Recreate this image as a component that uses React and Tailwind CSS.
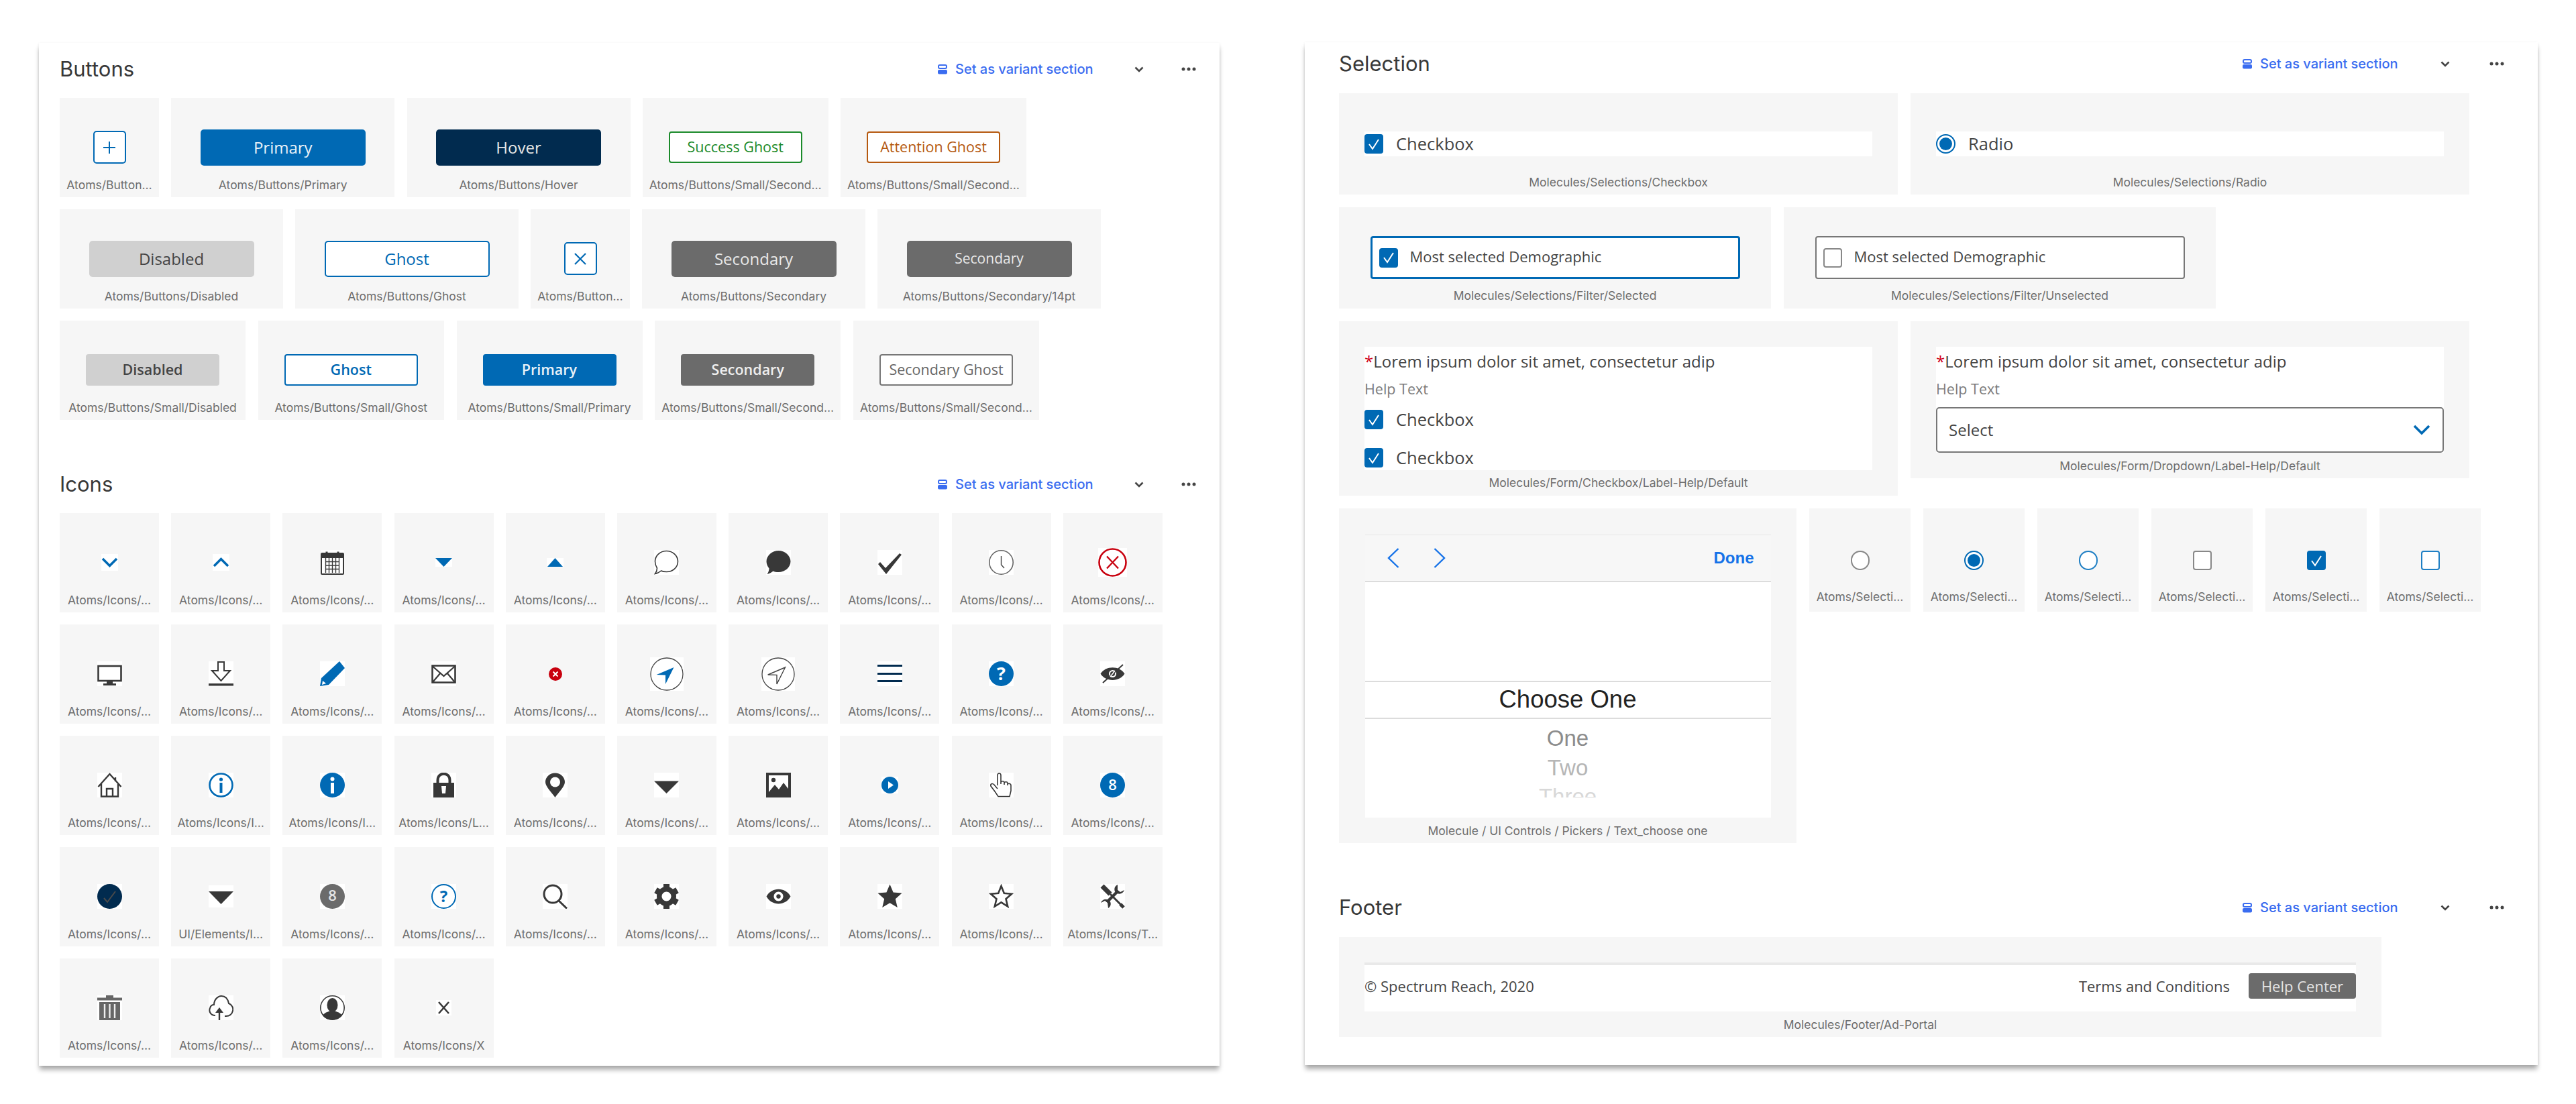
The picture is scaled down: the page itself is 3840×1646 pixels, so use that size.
const BLUE = "#0069b4";
const NAVY = "#012b4f";
const DARK = "#383838";

function Svg({ size = 37, h, children }) {
  return (
    <svg width={size} height={h || size} viewBox={`0 0 ${size} ${h || size}`} fill="none" className="block">
      {children}
    </svg>
  );
}

// white square behind each icon, like the exported frames
function Ico({ children }) {
  return <div className="bg-white">{children}</div>;
}

const glyph = { fontFamily: "'Open Sans', sans-serif", fontWeight: 700, textAnchor: "middle" };

const STAR = "18.5,0.5 23.6,12.6 36.6,13.6 26.8,22.2 29.8,35 18.5,28.2 7.2,35 10.2,22.2 0.4,13.6 13.4,12.6";

const icons = {
  chevronDown: <Svg size={25}><polyline points="2,7 12.5,17.5 23,7" stroke={BLUE} strokeWidth="3.5" /></Svg>,
  chevronUp: <Svg size={25}><polyline points="2,18 12.5,7.5 23,18" stroke={BLUE} strokeWidth="3.5" /></Svg>,
  calendar: (
    <Svg size={35} h={37}>
      <rect x="1" y="5" width="33" height="31" rx="1" fill="#fff" stroke={DARK} strokeWidth="2" />
      <rect x="1" y="5" width="33" height="7" fill={DARK} />
      <path d="M7.5 17.5H27.5M7.5 23H27.5M7.5 28.5H27.5M7.5 12V34M12.5 12V34M17.5 12V34M22.5 12V34M27.5 12V34" stroke={DARK} strokeWidth="1.4" />
      <path d="M9 9V2.5M26 9V2.5" stroke={DARK} strokeWidth="3" />
    </Svg>
  ),
  caretDown: <Svg size={25} h={13}><polygon points="0,0 25,0 12.5,13" fill={BLUE} /></Svg>,
  caretUp: <Svg size={25} h={13}><polygon points="1,13 24,13 12.5,0" fill={BLUE} /></Svg>,
  commentLine: (
    <Svg><path d="M18.5 1.5C28 1.5 35.5 8.5 35.5 17C35.5 26 28 32.5 18.5 32.5C15 32.5 12.5 32 10.5 31C8 33 5 35 1.5 35.5C3.5 33 4.5 30 4.5 27C2.5 24 1.5 21 1.5 17C1.5 8.5 9 1.5 18.5 1.5Z" stroke={DARK} strokeWidth="1.6" /></Svg>
  ),
  commentFill: (
    <Svg><path d="M18.5 1C28 1 36.5 8.5 36.5 17C36.5 26 28 33 18.5 33C15 33 12.5 32.5 10.5 31.5C8 33.5 5 35.5 1.5 36C3.5 33.5 4.5 30 4.5 27.5C2 24 .5 21 .5 17C.5 8.5 9 1 18.5 1Z" fill={DARK} /></Svg>
  ),
  check: <Svg><polygon points="1,21 4,18 12,27 33,5 36,7 13,36" fill={DARK} /></Svg>,
  clock: (
    <Svg>
      <circle cx="18.5" cy="18.5" r="17.7" stroke="#666" strokeWidth="1.6" />
      <path d="M18.5 9V22L23 27" stroke="#444" strokeWidth="1.4" />
    </Svg>
  ),
  xCircle: (
    <Svg size={43}>
      <circle cx="21.5" cy="21.5" r="20" stroke="#c8000e" strokeWidth="2.6" />
      <path d="M13 12.5L30 30.5M30 12.5L13 30.5" stroke="#c8000e" strokeWidth="2.4" />
    </Svg>
  ),
  monitor: (
    <Svg>
      <rect x="1.5" y="7" width="34" height="22" stroke={DARK} strokeWidth="2.6" />
      <rect x="14" y="30" width="9" height="3" fill={DARK} />
      <rect x="9" y="33" width="19" height="3" fill={DARK} />
    </Svg>
  ),
  download: (
    <Svg>
      <path d="M14 1H23V14H32L18.5 29L5 14H14Z" stroke={DARK} strokeWidth="2" />
      <rect y="33" width="37" height="3.5" fill={DARK} />
    </Svg>
  ),
  pencil: (
    <Svg>
      <path d="M29 0L37 10L13 35L0 37L2 25Z" fill={BLUE} />
      <path d="M3 35L4 29L9 33Z" fill="#fff" />
    </Svg>
  ),
  envelope: (
    <Svg>
      <rect x="1.5" y="6.5" width="34" height="25" stroke={DARK} strokeWidth="2.6" />
      <path d="M2 7.5L18.5 22L35 7.5M2 31L13.5 17.5M35 31L23.5 17.5" stroke={DARK} strokeWidth="2.2" />
    </Svg>
  ),
  xSmall: (
    <Svg size={20}>
      <circle cx="10" cy="10" r="10" fill="#c8000e" />
      <path d="M6.5 6.5L13.5 13.5M13.5 6.5L6.5 13.5" stroke="#fff" strokeWidth="2" />
    </Svg>
  ),
  navFill: (
    <Svg size={50}>
      <circle cx="25" cy="25" r="24" stroke="#444" strokeWidth="1.3" />
      <polygon points="35.5,15 9.7,26 23,26.4 23,40" fill={BLUE} />
    </Svg>
  ),
  navLine: (
    <Svg size={50}>
      <circle cx="25" cy="25" r="24" stroke="#444" strokeWidth="1.3" />
      <polygon points="35.5,15 9.7,26 23,26.4 23,40" stroke="#444" strokeWidth="1.4" />
    </Svg>
  ),
  hamburger: (
    <Svg>
      <rect y="5" width="37" height="3" fill={NAVY} />
      <rect y="17" width="37" height="3" fill={NAVY} />
      <rect y="28" width="37" height="3" fill={NAVY} />
    </Svg>
  ),
  helpFill: (
    <Svg>
      <circle cx="18.5" cy="18.5" r="18.5" fill={BLUE} />
      <text x="18.5" y="28" fontSize="27" fill="#fff" style={glyph}>?</text>
    </Svg>
  ),
  eyeOff: (
    <Svg>
      <path d="M.5 18.5C8 6 29 6 36.5 18.5C29 31 8 31 .5 18.5Z" fill={DARK} />
      <circle cx="18.5" cy="18.5" r="4.5" stroke="#fff" strokeWidth="2" />
      <path d="M4 32L34 5" stroke={DARK} strokeWidth="2" />
      <path d="M15 23L22 14" stroke="#fff" strokeWidth="1.5" />
    </Svg>
  ),
  home: (
    <Svg>
      <path d="M1.5 21L18.5 2L35.5 21M27 7V13M6 17V35.5H31V17M14 35.5V24H23V35.5" stroke={DARK} strokeWidth="2.4" />
    </Svg>
  ),
  infoLine: (
    <Svg>
      <circle cx="18.5" cy="18.5" r="17" stroke={BLUE} strokeWidth="2.6" />
      <circle cx="18.5" cy="10" r="2.6" fill={BLUE} />
      <rect x="16.5" y="15" width="4" height="15" fill={BLUE} />
    </Svg>
  ),
  infoFill: (
    <Svg>
      <circle cx="18.5" cy="18.5" r="18.5" fill={BLUE} />
      <circle cx="18.5" cy="9.5" r="3" fill="#fff" />
      <rect x="16" y="15" width="5" height="16" fill="#fff" />
    </Svg>
  ),
  lock: (
    <Svg>
      <rect x="3" y="15" width="31" height="22" fill={DARK} />
      <path d="M9.5 16V11C9.5 -1.5 27.5 -1.5 27.5 11V16" stroke={DARK} strokeWidth="4" />
      <polygon points="15,20 22,20 21,31 16,31" fill="#fff" />
    </Svg>
  ),
  pin: (
    <Svg>
      <path d="M18.5 .5C10.5 .5 4 6.5 4 14C4 21 14 30 18.5 37C23 30 33 21 33 14C33 6.5 26.5 .5 18.5 .5Z" fill={DARK} />
      <circle cx="18.5" cy="14" r="7.5" fill="#fff" />
    </Svg>
  ),
  caretDark: <Svg><polygon points="0,12.5 37,12.5 18.5,31" fill={DARK} /></Svg>,
  caretDarkShort: <Svg size={37} h={33}><polygon points="0,9 37,9 18.5,28" fill={DARK} /></Svg>,
  image: (
    <Svg>
      <rect width="37" height="37" fill={DARK} />
      <rect x="4" y="4" width="29" height="29" fill="#fff" />
      <circle cx="11" cy="11" r="3.2" fill={DARK} />
      <path d="M4 29L13 18L19 25L26 15L33 24V34H4Z" fill={DARK} />
    </Svg>
  ),
  play: (
    <Svg size={25}>
      <circle cx="12.5" cy="12.5" r="12.5" fill={BLUE} />
      <polygon points="10,7 18,12.5 10,18" fill="#fff" />
    </Svg>
  ),
  hand: (
    <Svg>
      <path d="M13 19V4C13 0 18 0 18 4V17M18 15C18 12 23 12 23 15V18M23 16C23 13 28 13 28 16V19M28 18C28 15 33 16 33 19V27L31 35.5H14L9 28L3 20C2 17 5 15 8 18L13 24" stroke={DARK} strokeWidth="1.6" />
    </Svg>
  ),
  badgeBlue: (
    <Svg>
      <circle cx="18.5" cy="18.5" r="18.5" fill={BLUE} />
      <text x="18.5" y="26" fontSize="22" fill="#fff" style={{ ...glyph, fontWeight: 600 }}>8</text>
    </Svg>
  ),
  navyDot: (
    <Svg>
      <circle cx="18.5" cy="18.5" r="18.5" fill={NAVY} />
      <polyline points="10,21 15,27 27,11" stroke="#4a4a4a" strokeWidth="2" />
    </Svg>
  ),
  badgeGray: (
    <Svg>
      <circle cx="18.5" cy="18.5" r="18.5" fill="#6b6b6b" />
      <text x="18.5" y="25" fontSize="22" fill="#e4e4e4" style={{ ...glyph, fontWeight: 600 }}>8</text>
    </Svg>
  ),
  helpLine: (
    <Svg>
      <circle cx="18.5" cy="18.5" r="17.5" stroke={BLUE} strokeWidth="2" />
      <text x="18.5" y="27" fontSize="24" fill={BLUE} style={glyph}>?</text>
    </Svg>
  ),
  search: (
    <Svg>
      <circle cx="15" cy="15" r="13" stroke={DARK} strokeWidth="3" />
      <path d="M24 25L36 36.5" stroke={DARK} strokeWidth="3" />
    </Svg>
  ),
  gear: (
    <Svg>
      {[0, 60, 120, 180, 240, 300].map((a) => (
        <rect key={a} x="14" y="0" width="9" height="9" fill={DARK} transform={`rotate(${a} 18.5 18.5)`} />
      ))}
      <circle cx="18.5" cy="18.5" r="14.5" fill={DARK} />
      <circle cx="18.5" cy="18.5" r="7" fill="#fff" />
    </Svg>
  ),
  eye: (
    <Svg>
      <path d="M.5 18.5C8 4 29 4 36.5 18.5C29 33 8 33 .5 18.5Z" fill={DARK} />
      <circle cx="18.5" cy="18.5" r="7" fill="#fff" />
      <circle cx="18.5" cy="18.5" r="3.2" fill={DARK} />
    </Svg>
  ),
  starFill: <Svg><polygon points={STAR} fill={DARK} /></Svg>,
  starLine: <Svg><polygon points="18.5,3 22.8,13.8 34,14.8 25.5,22.2 28.2,33.5 18.5,27.4 8.8,33.5 11.5,22.2 3,14.8 14.2,13.8" stroke={DARK} strokeWidth="2.6" /></Svg>,
  tools: (
    <Svg>
      <path d="M3 3L15 15" stroke={DARK} strokeWidth="7" />
      <path d="M15 15L31 31" stroke={DARK} strokeWidth="3" />
      <path d="M30 30L35 35" stroke={DARK} strokeWidth="5" />
      <path d="M10 27L27 10" stroke={DARK} strokeWidth="4.5" />
      <path d="M26 1C21 3 20 9 23 13C28 16 34 15 36 9L30 12L26 9Z" fill={DARK} />
      <path d="M12 36C16 34 17 28 14 25C9 21 3 23 1 28L7 25L11 28Z" fill={DARK} />
    </Svg>
  ),
  trash: (
    <Svg>
      <rect x="13" y="0" width="11" height="4" fill="#666" />
      <rect x="0" y="3.5" width="37" height="4" fill="#666" />
      <rect x="3" y="10" width="31" height="27" fill="#666" />
      <path d="M11 13V34M18.5 13V34M26 13V34" stroke="#eee" strokeWidth="2.4" />
    </Svg>
  ),
  upload: (
    <Svg>
      <path d="M10 30C3 30 0 24 2 19C3 15 6 14 8 14C8 6 14 1 19 1C26 1 29 7 30 12C35 14 37 19 36 23C35 28 31 31 26 31H24" stroke={DARK} strokeWidth="2" />
      <path d="M16 37V21" stroke={DARK} strokeWidth="2.4" />
      <polygon points="10,26 16,18 22,26" fill={DARK} />
    </Svg>
  ),
  user: (
    <Svg>
      <circle cx="18.5" cy="18.5" r="17.7" stroke={DARK} strokeWidth="1.6" />
      <ellipse cx="18.5" cy="14.5" rx="8" ry="10.5" fill={DARK} />
      <path d="M4 30C8 24 14 25 16 22H21C23 25 29 24 33 30C29 35 24 36.5 18.5 36.5C13 36.5 8 35 4 30Z" fill={DARK} />
    </Svg>
  ),
  close: <Svg size={23}><path d="M4 3L19 20M19 3L4 20" stroke={DARK} strokeWidth="2.6" /></Svg>,
};

const A = "Atoms/Icons/…";
const iconCards = [
  ["chevronDown", A], ["chevronUp", A], ["calendar", A], ["caretDown", A], ["caretUp", A],
  ["commentLine", A], ["commentFill", A], ["check", A], ["clock", A], ["xCircle", A],
  ["monitor", A], ["download", A], ["pencil", A], ["envelope", A], ["xSmall", A, true],
  ["navFill", A], ["navLine", A], ["hamburger", A], ["helpFill", A], ["eyeOff", A],
  ["home", A], ["infoLine", "Atoms/Icons/I…"], ["infoFill", "Atoms/Icons/I…"], ["lock", "Atoms/Icons/L…"], ["pin", A],
  ["caretDark", A], ["image", A], ["play", A], ["hand", A], ["badgeBlue", A],
  ["navyDot", A], ["caretDarkShort", "UI/Elements/I…"], ["badgeGray", A], ["helpLine", A], ["search", A],
  ["gear", A], ["eye", A], ["starFill", A], ["starLine", A], ["tools", "Atoms/Icons/T…"],
  ["trash", A], ["upload", A], ["user", A], ["close", "Atoms/Icons/X"],
];

function Label({ children, className = "" }) {
  return (
    <div className={`h-5 leading-5 text-[17.5px] text-[#6e6e6e] font-['Inter',sans-serif] whitespace-nowrap text-center ${className}`}>
      {children}
    </div>
  );
}

function Card({ w, label, children }) {
  return (
    <div className={`${w} h-[148px] bg-[#f6f6f6] pt-[27px] flex flex-col items-center shrink-0`}>
      <div className="h-[93px] flex items-center justify-center">{children}</div>
      <Label>{label}</Label>
    </div>
  );
}

const LG = "w-[246px] h-[54px] rounded-[5px] flex items-center justify-center font-['Open_Sans',sans-serif]";
const SM = "w-[199px] h-[47px] rounded-[4px] flex items-center justify-center font-['Open_Sans',sans-serif] text-[21.5px]";

function SquareBtn({ children }) {
  return (
    <div className="w-[49px] h-[49px] bg-white border-2 border-[#0069b4] rounded-[5px] flex items-center justify-center">
      {children}
    </div>
  );
}

function Header({ title, wide, className = "" }) {
  return (
    <div className={`h-[44px] flex items-center ${className}`}>
      <h2 className="text-[31px] text-[#383838] font-['Inter',sans-serif] font-normal">{title}</h2>
      <div className="ml-auto flex items-center">
        <svg width="16" height="15" viewBox="0 0 16 15" className="block">
          <rect x="2" y="1" width="12" height="5" rx="2" fill="none" stroke="#3a6cf0" strokeWidth="2" />
          <rect x="1" y="8" width="14" height="6.5" rx="2" fill="#3a6cf0" />
        </svg>
        <span className="ml-[11px] w-[207px] text-[20px] font-medium text-[#3a6cf0] font-['Inter',sans-serif] whitespace-nowrap">
          Set as variant section
        </span>
        <svg width="14" height="9" viewBox="0 0 14 9" className={`block ${wide ? "ml-[62px]" : "ml-[60px]"}`}>
          <polyline points="1.5,1.5 7,7 12.5,1.5" fill="none" stroke="#444" strokeWidth="2.6" />
        </svg>
        <svg width="22" height="6" viewBox="0 0 22 6" className={`block ${wide ? "ml-[59px]" : "ml-[56px]"}`}>
          <circle cx="3" cy="3" r="2.5" fill="#444" />
          <circle cx="11" cy="3" r="2.5" fill="#444" />
          <circle cx="19" cy="3" r="2.5" fill="#444" />
        </svg>
      </div>
    </div>
  );
}

function Box({ state, round }) {
  const shape = round ? "rounded-full" : "rounded-[4px]";
  if (state === "on" && !round) {
    return (
      <div className={`w-[28px] h-[29px] bg-[#0069b4] ${shape} flex items-center justify-center shrink-0`}>
        <svg width="20" height="20" viewBox="0 0 20 20"><polyline points="3,10 8,17 17,3" fill="none" stroke="#fff" strokeWidth="2" /></svg>
      </div>
    );
  }
  if (state === "on") {
    return (
      <div className="w-[29px] h-[29px] bg-white border-2 border-[#0069b4] rounded-full flex items-center justify-center shrink-0">
        <div className="w-[19px] h-[19px] bg-[#0069b4] rounded-full" />
      </div>
    );
  }
  const border = state === "focus" ? "border-[#1f7fc4]" : "border-[#888888]";
  return <div className={`w-[28px] h-[29px] bg-white border-2 ${border} ${shape} shrink-0`} />;
}

function CheckRow({ state, round, text, className = "" }) {
  return (
    <div className={`flex items-center gap-[19px] text-[25.5px] text-[#444] font-['Open_Sans',sans-serif] ${className}`}>
      <Box state={state} round={round} />
      <span>{text}</span>
    </div>
  );
}

function FormLabel() {
  return (
    <>
      <div className="h-[44px] flex items-center text-[24px] text-[#444] font-['Open_Sans',sans-serif] whitespace-nowrap">
        <span className="text-[#d0021b]">*</span>Lorem ipsum dolor sit amet, consectetur adip
      </div>
      <div className="mt-[5px] h-[28px] flex items-center text-[21.5px] text-[#7b7b7b] font-['Open_Sans',sans-serif]">Help Text</div>
    </>
  );
}

function FilterCard({ selected, label }) {
  return (
    <div className="w-[644px] h-[151px] bg-[#f6f6f6] pt-[43px] flex flex-col items-center">
      <div className={`w-[551px] h-[64px] bg-white rounded-[4px] flex items-center pl-[10px] gap-[18px] text-[22px] text-[#444] font-['Open_Sans',sans-serif] ${selected ? "border-[3px] border-[#0069b4]" : "border-2 border-[#777]"}`}>
        <Box state={selected ? "on" : "off"} />
        <span className="-mt-[3px]">Most selected Demographic</span>
      </div>
      <Label className="mt-[15px]">{label}</Label>
    </div>
  );
}

function Picker() {
  return (
    <div className="w-[682px] h-[499px] bg-[#f6f6f6] pt-[39px] flex flex-col items-center shrink-0">
      <div className="w-[605px] h-[422px] bg-white flex flex-col font-['Liberation_Sans',sans-serif] text-center">
        <div className="h-[71px] bg-[#f7f7f7] border-t border-[#e8e8e8] border-b-2 border-b-[#dcdcdc] flex items-center pl-[33px] pr-[25px]">
          <svg width="18" height="30" viewBox="0 0 18 30"><polyline points="16.5,1 2,15 16.5,29" fill="none" stroke="#1572e8" strokeWidth="2.4" /></svg>
          <svg width="18" height="30" viewBox="0 0 18 30" className="ml-[51px]"><polyline points="1.5,1 16,15 1.5,29" fill="none" stroke="#1572e8" strokeWidth="2.4" /></svg>
          <span className="ml-auto text-[24px] font-bold text-[#1572e8]">Done</span>
        </div>
        <div className="h-[147px]" />
        <div className="h-[57px] border-y-2 border-[#dcdcdc] flex items-center justify-center text-[36.5px] text-[#222]">Choose One</div>
        <div className="h-[117px] overflow-hidden pt-[7px] text-[33px]">
          <div className="h-[44px] leading-[44px] text-[#8c8c8c]">One</div>
          <div className="h-[44px] leading-[44px] text-[#b6b6b6]">Two</div>
          <div className="h-[44px] leading-[44px] -mt-[1px] text-[#d8d8d8]">Three</div>
        </div>
      </div>
      <Label className="mt-[10px]">Molecule / UI Controls / Pickers / Text_choose one</Label>
    </div>
  );
}

function AtomCard({ state, round }) {
  return (
    <div className="w-[151px] h-[154px] bg-[#f6f6f6] pt-[63px] flex flex-col items-center">
      <Box state={state} round={round} />
      <Label className="mt-[30px]">Atoms/Selecti…</Label>
    </div>
  );
}

export default function App() {
  return (
    <div className="w-[3840px] h-[1646px] bg-white overflow-hidden flex items-start pl-[58px] pt-[63px] gap-[127px]">
      {/* left frame */}
      <section className="w-[1760px] h-[1525px] mt-px bg-white pl-[31px] pr-[35px] pt-[17px] shadow-[0_7px_7px_-1px_rgba(0,0,0,0.32),0_1px_4px_rgba(0,0,0,0.08)]">
        <Header title="Buttons" className="mb-[21px]" />
        <div className="flex flex-col gap-[18px]">
          <div className="flex gap-[18.25px]">
            <Card w="w-[148px]" label="Atoms/Button…">
              <SquareBtn>
                <svg width="20" height="20" viewBox="0 0 20 20"><path d="M10 1V19M1 10H19" stroke="#0069b4" strokeWidth="2" /></svg>
              </SquareBtn>
            </Card>
            <Card w="w-[333px]" label="Atoms/Buttons/Primary"><div className={`${LG} text-[24px] bg-[#0069b4] text-[#e8f1f8]`}>Primary</div></Card>
            <Card w="w-[333px]" label="Atoms/Buttons/Hover"><div className={`${LG} text-[24px] bg-[#012b4f] text-[#e6e6e6]`}>Hover</div></Card>
            <Card w="w-[277px]" label="Atoms/Buttons/Small/Second…"><div className={`${SM} bg-white border-2 border-[#1b8a2a] text-[#1b8a2a]`}>Success Ghost</div></Card>
            <Card w="w-[277px]" label="Atoms/Buttons/Small/Second…"><div className={`${SM} bg-white border-2 border-[#b5590f] text-[#b5590f]`}>Attention Ghost</div></Card>
          </div>
          <div className="flex gap-[18px]">
            <Card w="w-[333px]" label="Atoms/Buttons/Disabled"><div className={`${LG} text-[24px] bg-[#d0d0d0] text-[#444]`}>Disabled</div></Card>
            <Card w="w-[333px]" label="Atoms/Buttons/Ghost"><div className={`${LG} text-[24px] bg-white border-2 border-[#0069b4] text-[#0069b4]`}>Ghost</div></Card>
            <Card w="w-[148px]" label="Atoms/Button…">
              <SquareBtn>
                <svg width="20" height="20" viewBox="0 0 20 20"><path d="M2 2L18 18M18 2L2 18" stroke="#0069b4" strokeWidth="2.2" /></svg>
              </SquareBtn>
            </Card>
            <Card w="w-[333px]" label="Atoms/Buttons/Secondary"><div className={`${LG} text-[24px] bg-[#6b6b6b] text-[#e8e8e8]`}>Secondary</div></Card>
            <Card w="w-[333px]" label="Atoms/Buttons/Secondary/14pt"><div className={`${LG} text-[21px] bg-[#6b6b6b] text-[#e8e8e8]`}>Secondary</div></Card>
          </div>
          <div className="flex gap-[18.75px]">
            <Card w="w-[277px]" label="Atoms/Buttons/Small/Disabled"><div className={`${SM} bg-[#d0d0d0] text-[#444] font-semibold`}>Disabled</div></Card>
            <Card w="w-[277px]" label="Atoms/Buttons/Small/Ghost"><div className={`${SM} bg-white border-2 border-[#0069b4] text-[#0069b4] font-semibold`}>Ghost</div></Card>
            <Card w="w-[277px]" label="Atoms/Buttons/Small/Primary"><div className={`${SM} bg-[#0069b4] text-[#e8f1f8] font-semibold`}>Primary</div></Card>
            <Card w="w-[277px]" label="Atoms/Buttons/Small/Second…"><div className={`${SM} bg-[#6b6b6b] text-[#eee] font-semibold`}>Secondary</div></Card>
            <Card w="w-[277px]" label="Atoms/Buttons/Small/Second…"><div className={`${SM} bg-white border-2 border-[#777] text-[#666]`}>Secondary Ghost</div></Card>
          </div>
        </div>

        <Header title="Icons" className="mt-[74px] mb-[21px]" />
        <div className="grid grid-cols-[repeat(10,148px)] gap-x-[18.2px] gap-y-[18px]">
          {iconCards.map(([name, label, bare], i) => (
            <Card key={i} w="w-[148px]" label={label}>
              {bare ? icons[name] : <Ico>{icons[name]}</Ico>}
            </Card>
          ))}
        </div>
      </section>

      {/* right frame */}
      <section className="w-[1838px] h-[1525px] bg-white pl-[51px] pr-[50px] pt-[10px] shadow-[0_7px_7px_-1px_rgba(0,0,0,0.32),0_1px_4px_rgba(0,0,0,0.08)]">
        <Header title="Selection" wide className="mb-[22px]" />
        <div className="flex flex-col gap-[19px]">
          <div className="flex gap-[19px]">
            {[["on", false, "Checkbox", "Molecules/Selections/Checkbox"], ["on", true, "Radio", "Molecules/Selections/Radio"]].map(([state, round, text, label]) => (
              <div key={text} className="w-[833px] h-[151px] bg-[#f6f6f6] pt-[57px] px-[38px] flex flex-col items-center">
                <CheckRow state={state} round={round} text={text} className="w-full h-[37px] bg-white" />
                <Label className="mt-[29px]">{label}</Label>
              </div>
            ))}
          </div>
          <div className="flex gap-[19px]">
            <FilterCard selected label="Molecules/Selections/Filter/Selected" />
            <FilterCard label="Molecules/Selections/Filter/Unselected" />
          </div>
          <div className="flex items-start gap-[19px]">
            <div className="w-[833px] h-[260px] bg-[#f6f6f6] pt-[38px] px-[38px] flex flex-col items-center">
              <div className="w-full h-[184px] bg-white">
                <FormLabel />
                <CheckRow state="on" text="Checkbox" className="mt-[17px] h-[29px]" />
                <CheckRow state="on" text="Checkbox" className="mt-[28px] h-[29px]" />
              </div>
              <Label className="mt-[9px]">Molecules/Form/Checkbox/Label-Help/Default</Label>
            </div>
            <div className="w-[833px] h-[234px] bg-[#f6f6f6] pt-[38px] px-[38px] flex flex-col items-center">
              <div className="w-full h-[158px] bg-white">
                <FormLabel />
                <div className="mt-[13px] h-[68px] border-2 border-[#777] rounded-[5px] flex items-center pl-[17px] pr-[18px] text-[24px] text-[#444] font-['Open_Sans',sans-serif]">
                  Select
                  <svg width="26" height="16" viewBox="0 0 26 16" className="ml-auto"><polyline points="2,2 13,13 24,2" fill="none" stroke="#0069b4" strokeWidth="3.6" /></svg>
                </div>
              </div>
              <Label className="mt-[10px]">Molecules/Form/Dropdown/Label-Help/Default</Label>
            </div>
          </div>
          <div className="flex items-start gap-[19px]">
            <Picker />
            <AtomCard state="off" round />
            <AtomCard state="on" round />
            <AtomCard state="focus" round />
            <AtomCard state="off" />
            <AtomCard state="on" />
            <AtomCard state="focus" />
          </div>
        </div>

        <Header title="Footer" wide className="mt-[74px] mb-[22px]" />
        <div className="w-[1554px] h-[149px] bg-[#f6f6f6] pt-[38px] px-[38px] flex flex-col items-center">
          <div className="w-full h-[73px] bg-white border-t-4 border-[#e9e9e9] pt-[12px]">
            <div className="flex items-center h-[38px] text-[22px] text-[#444] font-['Open_Sans',sans-serif]">
              <span>© Spectrum Reach, 2020</span>
              <span className="ml-auto">Terms and Conditions</span>
              <div className="ml-[28px] w-[160px] h-[38px] bg-[#6b6b6b] rounded-[4px] flex items-center justify-center text-[#e4e4e4]">Help Center</div>
            </div>
          </div>
          <Label className="mt-[10px]">Molecules/Footer/Ad-Portal</Label>
        </div>
      </section>
    </div>
  );
}
